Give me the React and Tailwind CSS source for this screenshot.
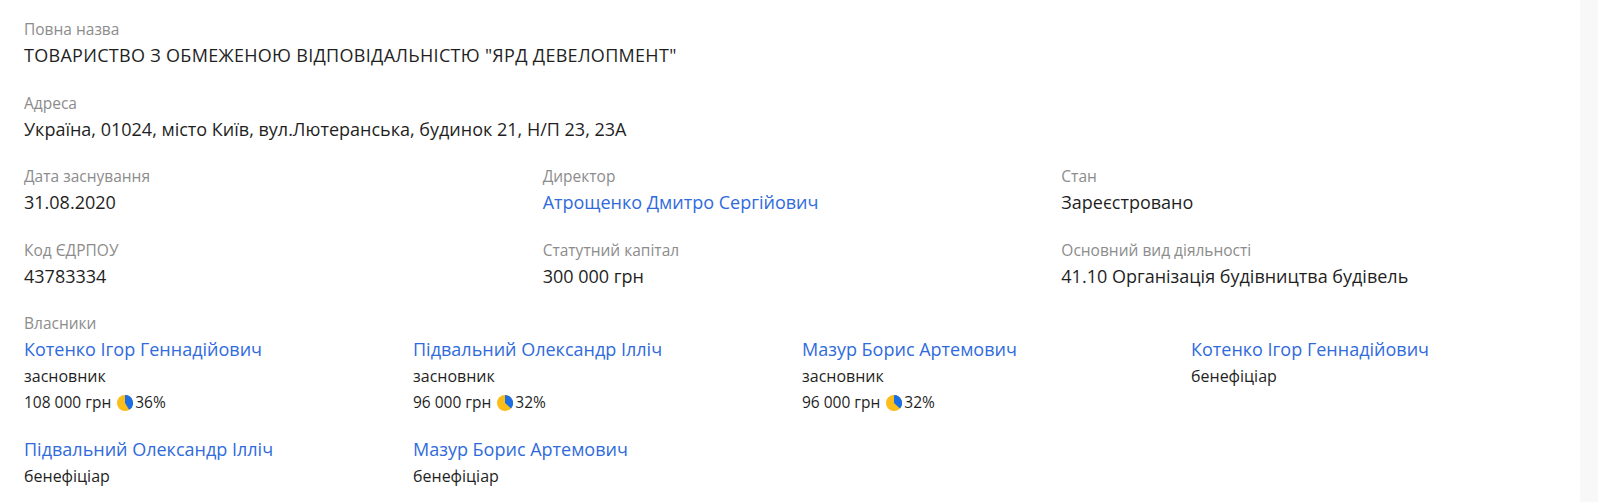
import React from "react";

const font = { fontFamily: '"Open Sans", "Noto Sans", sans-serif' };

function Pie({ pct }) {
  const a = (pct / 100) * 2 * Math.PI * 1.15;
  const r = 8;
  const cx = 8;
  const cy = 8;
  const x = cx + r * Math.sin(a);
  const y = cy - r * Math.cos(a);
  const large = a > Math.PI ? 1 : 0;
  return (
    <svg width="16" height="16" viewBox="0 0 16 16" className="inline-block ml-[6px] mr-[2px]">
      <circle cx="8" cy="8" r="8" fill="#fbbd1a" />
      <path d={`M8 8 L8 0 A8 8 0 ${large} 1 ${x} ${y} Z`} fill="#1b6ee6" />
    </svg>
  );
}

function Field({ label, value, link, wide }) {
  return (
    <div className="mb-[20.5px]">
      <div className="text-[15.5px] leading-[26px] text-[#8c8c8c]">{label}</div>
      <div
        className={`text-[18px] leading-[27px] ${link ? "text-[#2f6bdc]" : "text-[#1f1f1f]"} ${
          wide ? "tracking-[0.3px]" : ""
        }`}
      >
        {value}
      </div>
    </div>
  );
}

function Owner({ name, role, amount, pct }) {
  return (
    <div className="mb-[20px]">
      <div className="text-[18px] leading-[27px] text-[#2f6bdc]">{name}</div>
      <div className="text-[16px] leading-[26px] text-[#1f1f1f]">{role}</div>
      {amount && (
        <div className="text-[15.5px] leading-[27px] text-[#1f1f1f] flex items-center">
          <span>{amount}</span>
          <Pie pct={pct} />
          <span>{pct}%</span>
        </div>
      )}
    </div>
  );
}

export default function App() {
  return (
    <div className="flex min-h-[502px] bg-white" style={font}>
      <div className="flex-1 pl-6 pt-[16px]">
        <Field label="Повна назва" value={'ТОВАРИСТВО З ОБМЕЖЕНОЮ ВІДПОВІДАЛЬНІСТЮ "ЯРД ДЕВЕЛОПМЕНТ"'} wide />
        <Field label="Адреса" value="Україна, 01024, місто Київ, вул.Лютеранська, будинок 21, Н/П 23, 23А" />
        <div className="grid grid-cols-3">
          <Field label="Дата заснування" value="31.08.2020" />
          <Field label="Директор" value="Атрощенко Дмитро Сергійович" link />
          <Field label="Стан" value="Зареєстровано" />
          <Field label="Код ЄДРПОУ" value="43783334" />
          <Field label="Статутний капітал" value="300 000 грн" />
          <Field label="Основний вид діяльності" value="41.10 Організація будівництва будівель" />
        </div>
        <div className="text-[15.5px] leading-[26px] text-[#8c8c8c]">Власники</div>
        <div className="grid grid-cols-4">
          <Owner name="Котенко Ігор Геннадійович" role="засновник" amount="108 000 грн" pct={36} />
          <Owner name="Підвальний Олександр Ілліч" role="засновник" amount="96 000 грн" pct={32} />
          <Owner name="Мазур Борис Артемович" role="засновник" amount="96 000 грн" pct={32} />
          <Owner name="Котенко Ігор Геннадійович" role="бенефіціар" />
          <Owner name="Підвальний Олександр Ілліч" role="бенефіціар" />
          <Owner name="Мазур Борис Артемович" role="бенефіціар" />
        </div>
      </div>
      <div className="w-[18px] bg-[#f8f8f8]" />
    </div>
  );
}
